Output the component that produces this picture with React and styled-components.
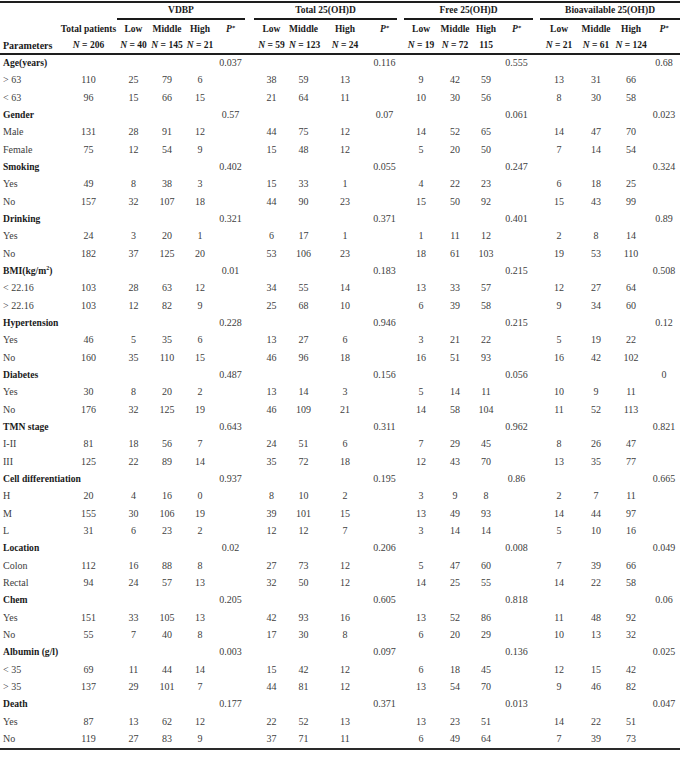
import React from "react";
import styled, { createGlobalStyle } from "styled-components";

const Global = createGlobalStyle`
  html, body { margin: 0; padding: 0; background: #fff; }
  body { font-family: "Liberation Serif", "Times New Roman", serif; }
`;

// column widths, left to right (spacers between the four groups)
const COLS = [60, 57, 33, 34, 32, 29, 9, 35, 29, 54, 25, 7, 34, 34, 28, 33, 7, 38, 36, 34, 32];

const GROUPS = [
  { name: "VDBP", n: ["N = 40", "N = 145", "N = 21"] },
  { name: "Total 25(OH)D", n: ["N = 59", "N = 123", "N = 24"] },
  { name: "Free 25(OH)D", n: ["N = 19", "N = 72", "115"] },
  { name: "Bioavailable 25(OH)D", n: ["N = 21", "N = 61", "N = 124"] },
];

const DATA = [
  { label: "Age(years)", p: ["0.037", "0.116", "0.555", "0.68"], rows: [
    ["> 63", 110, [25, 79, 6], [38, 59, 13], [9, 42, 59], [13, 31, 66]],
    ["< 63", 96, [15, 66, 15], [21, 64, 11], [10, 30, 56], [8, 30, 58]],
  ] },
  { label: "Gender", p: ["0.57", "0.07", "0.061", "0.023"], rows: [
    ["Male", 131, [28, 91, 12], [44, 75, 12], [14, 52, 65], [14, 47, 70]],
    ["Female", 75, [12, 54, 9], [15, 48, 12], [5, 20, 50], [7, 14, 54]],
  ] },
  { label: "Smoking", p: ["0.402", "0.055", "0.247", "0.324"], rows: [
    ["Yes", 49, [8, 38, 3], [15, 33, 1], [4, 22, 23], [6, 18, 25]],
    ["No", 157, [32, 107, 18], [44, 90, 23], [15, 50, 92], [15, 43, 99]],
  ] },
  { label: "Drinking", p: ["0.321", "0.371", "0.401", "0.89"], rows: [
    ["Yes", 24, [3, 20, 1], [6, 17, 1], [1, 11, 12], [2, 8, 14]],
    ["No", 182, [37, 125, 20], [53, 106, 23], [18, 61, 103], [19, 53, 110]],
  ] },
  { label: <>BMI(kg/m<sup>2</sup>)</>, p: ["0.01", "0.183", "0.215", "0.508"], rows: [
    ["< 22.16", 103, [28, 63, 12], [34, 55, 14], [13, 33, 57], [12, 27, 64]],
    ["> 22.16", 103, [12, 82, 9], [25, 68, 10], [6, 39, 58], [9, 34, 60]],
  ] },
  { label: "Hypertension", p: ["0.228", "0.946", "0.215", "0.12"], rows: [
    ["Yes", 46, [5, 35, 6], [13, 27, 6], [3, 21, 22], [5, 19, 22]],
    ["No", 160, [35, 110, 15], [46, 96, 18], [16, 51, 93], [16, 42, 102]],
  ] },
  { label: "Diabetes", p: ["0.487", "0.156", "0.056", "0"], rows: [
    ["Yes", 30, [8, 20, 2], [13, 14, 3], [5, 14, 11], [10, 9, 11]],
    ["No", 176, [32, 125, 19], [46, 109, 21], [14, 58, 104], [11, 52, 113]],
  ] },
  { label: "TMN stage", p: ["0.643", "0.311", "0.962", "0.821"], rows: [
    ["I-II", 81, [18, 56, 7], [24, 51, 6], [7, 29, 45], [8, 26, 47]],
    ["III", 125, [22, 89, 14], [35, 72, 18], [12, 43, 70], [13, 35, 77]],
  ] },
  { label: "Cell differentiation", p: ["0.937", "0.195", "0.86", "0.665"], rows: [
    ["H", 20, [4, 16, 0], [8, 10, 2], [3, 9, 8], [2, 7, 11]],
    ["M", 155, [30, 106, 19], [39, 101, 15], [13, 49, 93], [14, 44, 97]],
    ["L", 31, [6, 23, 2], [12, 12, 7], [3, 14, 14], [5, 10, 16]],
  ] },
  { label: "Location", p: ["0.02", "0.206", "0.008", "0.049"], rows: [
    ["Colon", 112, [16, 88, 8], [27, 73, 12], [5, 47, 60], [7, 39, 66]],
    ["Rectal", 94, [24, 57, 13], [32, 50, 12], [14, 25, 55], [14, 22, 58]],
  ] },
  { label: "Chem", p: ["0.205", "0.605", "0.818", "0.06"], rows: [
    ["Yes", 151, [33, 105, 13], [42, 93, 16], [13, 52, 86], [11, 48, 92]],
    ["No", 55, [7, 40, 8], [17, 30, 8], [6, 20, 29], [10, 13, 32]],
  ] },
  { label: "Albumin (g/l)", p: ["0.003", "0.097", "0.136", "0.025"], rows: [
    ["< 35", 69, [11, 44, 14], [15, 42, 12], [6, 18, 45], [12, 15, 42]],
    ["> 35", 137, [29, 101, 7], [44, 81, 12], [13, 54, 70], [9, 46, 82]],
  ] },
  { label: "Death", p: ["0.177", "0.371", "0.013", "0.047"], rows: [
    ["Yes", 87, [13, 62, 12], [22, 52, 13], [13, 23, 51], [14, 22, 51]],
    ["No", 119, [27, 83, 9], [37, 71, 11], [6, 49, 64], [7, 39, 73]],
  ] },
];

const Table = styled.table`
  width: 680px;
  table-layout: fixed;
  border-collapse: separate;
  border-spacing: 0;
  margin-top: 1px;
  font-size: 10px;
  color: #404040;
  border-top: 2px solid #1e1e1e;
  border-bottom: 2px solid #2a2a2a;
`;

const GroupCell = styled.th`
  height: 14.5px;
  padding: 0;
  text-align: center;
  font-size: 9.5px;
  font-weight: bold;
  color: #1a1a1a;
  white-space: nowrap;
  border-bottom: ${({ $rule }) => ($rule ? "2.5px solid #1a1a1a" : "none")};
`;

const HeadCell = styled.th`
  height: ${({ $h }) => $h}px;
  padding: 0;
  text-align: ${({ $left }) => ($left ? "left" : "center")};
  padding-left: ${({ $left }) => ($left ? "3px" : "0")};
  font-size: ${({ $left }) => ($left ? "10px" : "9.5px")};
  font-weight: bold;
  color: #1a1a1a;
  white-space: nowrap;
  vertical-align: middle;
  border-bottom: ${({ $rule }) => ($rule ? "2px solid #1e1e1e" : "none")};
`;

const Ital = styled.i`
  font-style: italic;
  font-weight: bold;
`;

const Star = styled.span`
  font-size: 6.5px;
  vertical-align: 2px;
`;

const Cell = styled.td`
  height: 17.33px;
  padding: 0;
  text-align: center;
  white-space: nowrap;
  overflow: visible;
  vertical-align: middle;
  line-height: 12px;
`;

const Label = styled(Cell)`
  text-align: left;
  padding-left: 3px;
  font-size: ${({ $bold }) => ($bold ? "9.6px" : "10px")};
  font-weight: ${({ $bold }) => ($bold ? "bold" : "normal")};
  color: ${({ $bold }) => ($bold ? "#1a1a1a" : "#404040")};
  sup { font-size: 6px; vertical-align: 4px; line-height: 0; }
`;

function NText({ text }) {
  if (!text.startsWith("N")) return text;
  return (
    <>
      <Ital>N</Ital>
      {text.slice(1)}
    </>
  );
}

const PHead = () => (
  <Ital>
    P<Star>*</Star>
  </Ital>
);

export default function App() {
  return (
    <>
      <Global />
      <Table>
        <colgroup>
          {COLS.map((w, i) => (
            <col key={i} style={{ width: w }} />
          ))}
        </colgroup>
        <thead>
          <tr>
            <GroupCell />
            <GroupCell />
            {GROUPS.map((g, i) => (
              <React.Fragment key={g.name}>
                <GroupCell colSpan={4} $rule>
                  {g.name}
                </GroupCell>
                {i < GROUPS.length - 1 && <GroupCell />}
              </React.Fragment>
            ))}
          </tr>
          <tr>
            <HeadCell $h={18} />
            <HeadCell $h={18}>Total patients</HeadCell>
            {GROUPS.map((g, i) => (
              <React.Fragment key={g.name}>
                <HeadCell $h={18}>Low</HeadCell>
                <HeadCell $h={18}>Middle</HeadCell>
                <HeadCell $h={18}>High</HeadCell>
                <HeadCell $h={18}>
                  <PHead />
                </HeadCell>
                {i < GROUPS.length - 1 && <HeadCell $h={18} />}
              </React.Fragment>
            ))}
          </tr>
          <tr>
            <HeadCell $h={15} $left $rule>
              Parameters
            </HeadCell>
            <HeadCell $h={15} $rule>
              <NText text="N = 206" />
            </HeadCell>
            {GROUPS.map((g, i) => (
              <React.Fragment key={g.name}>
                {g.n.map((t, j) => (
                  <HeadCell key={j} $h={15} $rule>
                    <NText text={t} />
                  </HeadCell>
                ))}
                <HeadCell $h={15} $rule />
                {i < GROUPS.length - 1 && <HeadCell $h={15} $rule />}
              </React.Fragment>
            ))}
          </tr>
        </thead>
        <tbody>
          {DATA.map((sec, si) => (
            <React.Fragment key={si}>
              <tr>
                <Label $bold>{sec.label}</Label>
                <Cell />
                {sec.p.map((p, i) => (
                  <React.Fragment key={i}>
                    <Cell />
                    <Cell />
                    <Cell />
                    <Cell>{p}</Cell>
                    {i < 3 && <Cell />}
                  </React.Fragment>
                ))}
              </tr>
              {sec.rows.map((r, ri) => (
                <tr key={ri}>
                  <Label>{r[0]}</Label>
                  <Cell>{r[1]}</Cell>
                  {r.slice(2).map((vals, gi) => (
                    <React.Fragment key={gi}>
                      {vals.map((v, vi) => (
                        <Cell key={vi}>{v}</Cell>
                      ))}
                      <Cell />
                      {gi < 3 && <Cell />}
                    </React.Fragment>
                  ))}
                </tr>
              ))}
            </React.Fragment>
          ))}
        </tbody>
      </Table>
    </>
  );
}
